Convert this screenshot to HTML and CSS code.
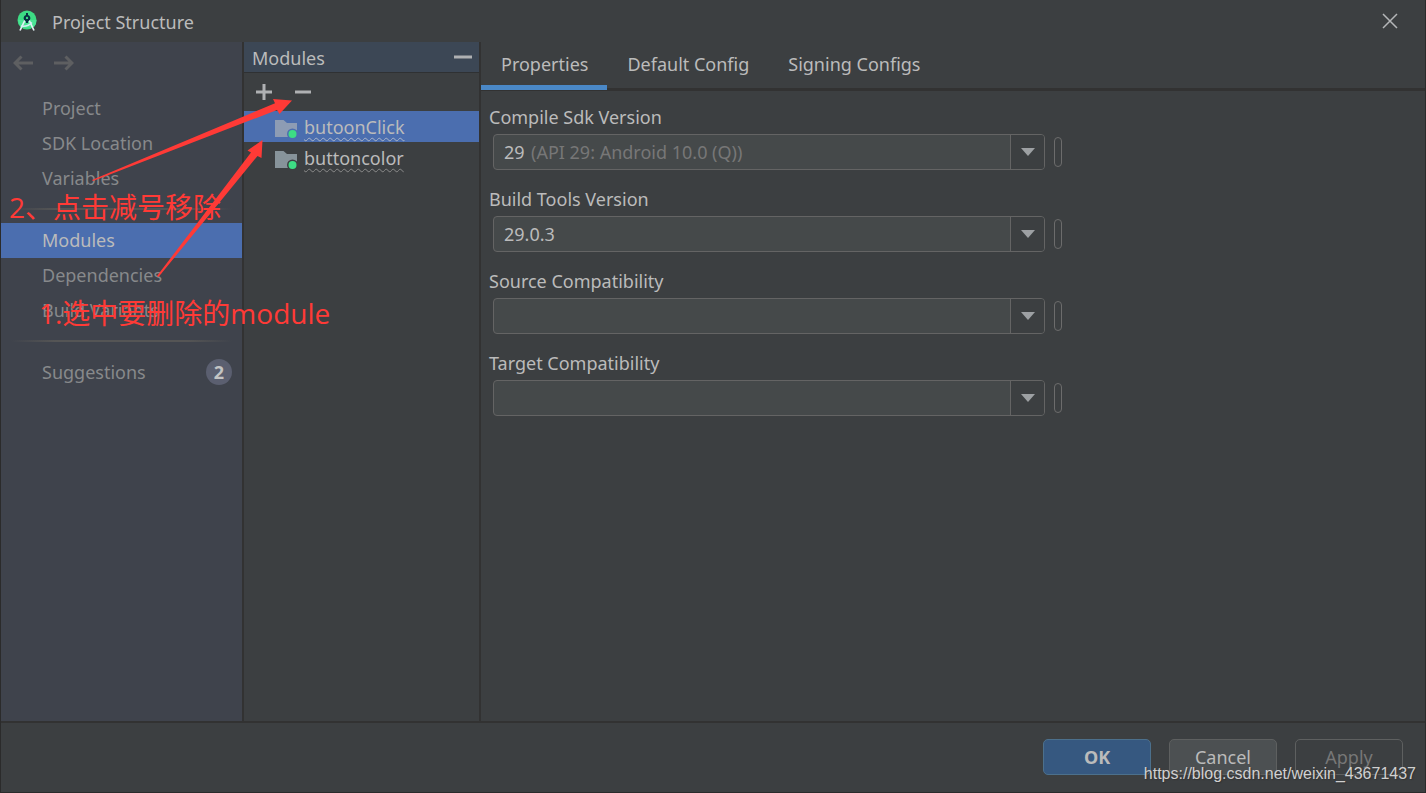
FILE: index.html
```html
<!DOCTYPE html>
<html lang="en">
<head>
<meta charset="utf-8">
<title>Project Structure</title>
<link rel="stylesheet" href="styles.css">
</head>
<body>
<div class="dialog">
  <header class="titlebar">
    <svg class="app-icon" width="20" height="22" viewBox="0 0 20 22">
      <circle cx="10" cy="10" r="9.500" fill="#3ddc84"/>
      <path d="M1 10H19.500A9.500 9.500 0 0 1 17 17L4 18z" fill="#4be394"/>
      <path d="M8 10 3 20.500M12 10 17 20.500" stroke="#e4f2f6" stroke-width="1.700" fill="none"/>
      <path d="M4 16Q11 17 15 12.500" stroke="#d5eef5" stroke-width="1.400" fill="none"/>
      <path d="M9 3h2v2a3.300 3.300 0 0 1 1.800 5L11 11.500V13H9V11.500L7.200 10A3.300 3.300 0 0 1 9 5z" fill="#073042"/>
      <circle cx="10" cy="7.900" r="1.200" fill="#3ddc84"/>
    </svg>
    <h1 class="title">Project Structure</h1>
    <button class="icon-button close" aria-label="Close">
      <svg width="16" height="16" viewBox="0 0 16 16"><path d="M1 1 15 15M15 1 1 15" stroke="#b4b6b8" stroke-width="1.500"/></svg>
    </button>
  </header>

  <div class="body">
    <nav class="sidebar">
      <div class="history">
        <button class="icon-button" aria-label="Back">
          <svg width="20" height="16" viewBox="0 0 20 16"><path d="M20 8H2M8.500 1.500 2 8 8.500 14.500" stroke="#5e5f61" stroke-width="3" fill="none"/></svg>
        </button>
        <button class="icon-button" aria-label="Forward">
          <svg width="20" height="16" viewBox="0 0 20 16"><path d="M0 8H18M11.500 1.500 18 8 11.500 14.500" stroke="#5e5f61" stroke-width="3" fill="none"/></svg>
        </button>
      </div>
      <a class="nav-item" href="#">Project</a>
      <a class="nav-item" href="#">SDK Location</a>
      <a class="nav-item" href="#">Variables</a>
      <div class="separator"></div>
      <a class="nav-item selected" href="#">Modules</a>
      <a class="nav-item" href="#">Dependencies</a>
      <a class="nav-item" href="#">Build Variants</a>
      <div class="separator"></div>
      <a class="nav-item" href="#">Suggestions <span class="count">2</span></a>
    </nav>

    <section class="modules">
      <div class="modules-head">
        <h2 class="modules-title">Modules</h2>
        <button class="icon-button" aria-label="Hide">
          <svg width="18" height="4" viewBox="0 0 18 4"><path d="M0 2H18" stroke="#afb1b3" stroke-width="3"/></svg>
        </button>
      </div>
      <div class="toolbar">
        <button class="icon-button" aria-label="Add module">
          <svg width="16" height="16" viewBox="0 0 16 16"><path d="M0 8H16M8 0V16" stroke="#afb1b3" stroke-width="3"/></svg>
        </button>
        <button class="icon-button" aria-label="Remove module">
          <svg width="16" height="16" viewBox="0 0 16 16"><path d="M0 8H16" stroke="#afb1b3" stroke-width="3"/></svg>
        </button>
      </div>
      <ul class="module-list">
        <li class="module selected">
          <svg width="22" height="20" viewBox="0 0 22 20"><path d="M0 2H8.500L12 5H22V19H0z" fill="#8d9cb4"/><circle cx="17.500" cy="16" r="5.500" fill="#4b6eaf"/><circle cx="17.500" cy="16" r="4" fill="#3ddc84"/></svg>
          <span class="module-name">butoonClick</span>
        </li>
        <li class="module">
          <svg width="22" height="20" viewBox="0 0 22 20"><path d="M0 2H8.500L12 5H22V19H0z" fill="#87939a"/><circle cx="17.500" cy="16" r="5.500" fill="#3c3f41"/><circle cx="17.500" cy="16" r="4" fill="#3ddc84"/></svg>
          <span class="module-name">buttoncolor</span>
        </li>
      </ul>
    </section>

    <main class="content">
      <div class="tabs" role="tablist">
        <button class="tab active" role="tab" aria-selected="true">Properties</button>
        <button class="tab" role="tab">Default Config</button>
        <button class="tab" role="tab">Signing Configs</button>
      </div>
      <form class="fields">
        <div class="field">
          <label for="compile">Compile Sdk Version</label>
          <div class="row">
            <div class="combo">
              <input class="short" id="compile" value="29"><span class="hint">(API 29: Android 10.0 (Q))</span>
              <button class="arrow" type="button" aria-label="Show versions"><svg width="14" height="8" viewBox="0 0 14 8"><path d="M0 0H14L7 8z" fill="#9da0a3"/></svg></button>
            </div>
            <button class="pill" type="button" aria-label="Bind variable"></button>
          </div>
        </div>
        <div class="field">
          <label for="tools">Build Tools Version</label>
          <div class="row">
            <div class="combo">
              <input id="tools" value="29.0.3">
              <button class="arrow" type="button" aria-label="Show versions"><svg width="14" height="8" viewBox="0 0 14 8"><path d="M0 0H14L7 8z" fill="#9da0a3"/></svg></button>
            </div>
            <button class="pill" type="button" aria-label="Bind variable"></button>
          </div>
        </div>
        <div class="field">
          <label for="source">Source Compatibility</label>
          <div class="row">
            <div class="combo">
              <input id="source">
              <button class="arrow" type="button" aria-label="Show versions"><svg width="14" height="8" viewBox="0 0 14 8"><path d="M0 0H14L7 8z" fill="#9da0a3"/></svg></button>
            </div>
            <button class="pill" type="button" aria-label="Bind variable"></button>
          </div>
        </div>
        <div class="field">
          <label for="target">Target Compatibility</label>
          <div class="row">
            <div class="combo">
              <input id="target">
              <button class="arrow" type="button" aria-label="Show versions"><svg width="14" height="8" viewBox="0 0 14 8"><path d="M0 0H14L7 8z" fill="#9da0a3"/></svg></button>
            </div>
            <button class="pill" type="button" aria-label="Bind variable"></button>
          </div>
        </div>
      </form>
    </main>
  </div>

  <footer class="footer">
    <button class="action primary">OK</button>
    <button class="action">Cancel</button>
    <button class="action" disabled>Apply</button>
  </footer>

  <svg class="arrows" width="340" height="300" viewBox="0 0 340 300">
    <path d="M91 180 274 103.300 272 99 291 100.500 278.500 114 276 110 92 181z" fill="#ff3a36"/>
    <path d="M156 276 250 152.500 246.500 150.500 261.500 140 260.500 158 256.500 156 157.500 277z" fill="#ff3a36"/>
  </svg>
  <p class="note note-remove" lang="zh">2、点击减号移除</p>
  <p class="note note-select" lang="zh">1.选中要删除的module</p>
  <p class="watermark">https://blog.csdn.net/weixin_43671437</p>
</div>
</body>
</html>
```

FILE: styles.css
```css
* {
  box-sizing: border-box;
}

body,
h1,
h2,
p,
ul {
  margin: 0;
  padding: 0;
}

body {
  background: #3c3f41;
  color: #bbbbbb;
  font: 18px/24px "Noto Sans", "Noto Sans CJK SC", sans-serif;
}

button,
input {
  margin: 0;
  padding: 0;
  border: 0;
  background: none;
  color: inherit;
  font: inherit;
}

svg {
  display: block;
  flex: none;
}

.dialog {
  position: relative;
  display: flex;
  flex-direction: column;
  min-height: 100vh;
  border: 1px solid #2b2b2b;
  border-top: 0;
  overflow: hidden;
}

.titlebar {
  display: flex;
  align-items: center;
  height: 42px;
  padding: 0 27px 0 16px;
}

.title {
  margin-left: 15px;
  padding-top: 2px;
  font-size: 18px;
  font-weight: 400;
}

.close {
  margin-left: auto;
}

.body {
  display: flex;
  flex: 1;
  border-bottom: 2px solid #323232;
}

.sidebar {
  flex: 0 0 243px;
  border-right: 2px solid #323232;
  background: #3f434c;
}

.history {
  display: flex;
  gap: 21px;
  align-items: center;
  height: 49px;
  padding: 0 12px 7px;
}

.nav-item {
  display: flex;
  align-items: center;
  justify-content: space-between;
  height: 35px;
  padding: 0 10px 1px 41px;
  color: #87898b;
  text-decoration: none;
}

.nav-item.selected {
  background: #4b6eaf;
  color: #bbbbbb;
}

.separator {
  height: 27px;
  padding: 12px 10px 13px;
  background: linear-gradient(90deg, transparent, #555555 20%, #555555 80%, transparent) content-box;
}

.count {
  width: 26px;
  height: 26px;
  border-radius: 50%;
  background: #5b5f70;
  color: #c4c4c4;
  font-weight: 700;
  line-height: 26px;
  text-align: center;
}

.modules {
  flex: 0 0 235px;
}

.modules-head {
  display: flex;
  align-items: center;
  justify-content: space-between;
  height: 31px;
  padding: 0 7px 0 8px;
  border-bottom: 1px solid #2f3133;
  background: #3c4755;
}

.modules-title {
  padding-top: 2px;
  font-size: 18px;
  font-weight: 400;
}

.toolbar {
  display: flex;
  gap: 23px;
  align-items: center;
  height: 38px;
  padding: 0 12px;
}

.module-list {
  list-style: none;
}

.module {
  display: flex;
  gap: 7px;
  align-items: center;
  height: 31px;
  padding: 2px 30px 0 31px;
}

.module.selected {
  background: #4b6eaf;
}

.module-name {
  text-decoration: underline wavy #8a8a8a 1px;
  text-underline-offset: 3px;
  text-decoration-skip-ink: none;
  line-height: 27px;
}

.module.selected .module-name {
  text-decoration-color: #a9b3c8;
}

.content {
  flex: 1;
  min-width: 0;
  border-left: 2px solid #323232;
}

.tabs {
  display: flex;
  height: 49px;
  border-bottom: 3px solid #323232;
}

.tab {
  height: 48px;
  padding: 0 19px 0 20px;
  border-bottom: 5px solid transparent;
}

.tab.active {
  border-color: #4a88c7;
}

.fields {
  display: grid;
  gap: 17px;
  padding: 14px 8px;
}

.field {
  display: grid;
  gap: 5px;
}

.row {
  display: flex;
  gap: 9px;
  align-items: center;
  padding-left: 4px;
}

.combo {
  display: flex;
  flex: 0 1 552px;
  min-width: 0;
  height: 36px;
  border: 1px solid #646464;
  border-radius: 4px;
  background: #45494a;
}

.combo input {
  flex: 1;
  min-width: 0;
  padding-left: 10px;
}

.combo .short {
  flex: 0 0 37px;
}

.hint {
  flex: 1;
  color: #777777;
  line-height: 34px;
}

.arrow {
  display: grid;
  place-items: center;
  width: 34px;
  border-left: 1px solid #646464;
  border-radius: 0 3px 3px 0;
  background: #3c3f41;
}

.pill {
  width: 8px;
  height: 30px;
  border: 1px solid #6c6c6c;
  border-radius: 4px;
}

.footer {
  display: flex;
  gap: 18px;
  justify-content: flex-end;
  height: 69px;
  padding: 16px 22px;
}

.action {
  width: 108px;
  height: 36px;
  border: 1px solid #5e6060;
  border-radius: 5px;
  background: #4c5052;
}

.action.primary {
  border-color: #4c708c;
  background: #365880;
  font-weight: 700;
}

.action:disabled {
  background: none;
  color: #777777;
}

.arrows {
  position: absolute;
  top: 0;
  left: 0;
  pointer-events: none;
}

.note {
  position: absolute;
  color: #ff3a36;
  font: 28px/40px "Open Sans", "Noto Sans CJK SC", sans-serif;
  white-space: nowrap;
}

.note-remove {
  top: 187px;
  left: 8px;
}

.note-select {
  top: 293px;
  left: 38px;
}

.watermark {
  position: absolute;
  right: 9px;
  bottom: 6px;
  color: #d0d0d0;
  font: 16px/24px "Liberation Sans", Arial, sans-serif;
  text-shadow: 1px 1px 1px #333333;
}
```
